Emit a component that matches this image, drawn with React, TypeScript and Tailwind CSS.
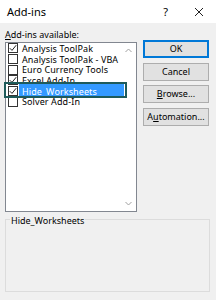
import React from "react";

const items = [
  { label: "Analysis ToolPak", checked: true },
  { label: "Analysis ToolPak - VBA", checked: false },
  { label: "Euro Currency Tools", checked: false },
  { label: "Excel Add-In", checked: true },
  { label: "Hide_Worksheets", checked: true, selected: true },
  { label: "Solver Add-In", checked: false },
];

const Check = ({ checked }: { checked: boolean }) => (
  <div className="w-[10px] h-[10px] shrink-0 border border-[#333] bg-white flex items-center justify-center">
    {checked && (
      <svg width="8" height="8" viewBox="0 0 8 8">
        <path d="M0.8 4.2 L3 6.4 L7.2 1.2" fill="none" stroke="#222" strokeWidth="1" />
      </svg>
    )}
  </div>
);

const Btn = ({ children, primary }: { children: React.ReactNode; primary?: boolean }) => (
  <div
    className={`h-[18px] w-[66px] flex items-center justify-center bg-[#e1e1e1] text-[9px] text-black border ${
      primary ? "border-[#0078d7] border-2" : "border-[#adadad]"
    }`}
  >
    {children}
  </div>
);

export default function App() {
  return (
    <div
      className="relative w-[216px] h-[300px] bg-[#f0f0f0] overflow-hidden text-black"
      style={{ fontFamily: '"Noto Sans", "Open Sans", sans-serif' }}
    >
      <div className="h-[23px] bg-white flex items-center pl-[7px] pr-[12px]">
        <span className="text-[11px] leading-none">Add-ins</span>
        <span className="ml-auto text-[11px] leading-none mr-[26px]">?</span>
        <svg width="10" height="10" viewBox="0 0 10 10">
          <path d="M1 1 L9 9 M9 1 L1 9" stroke="#222" strokeWidth="1" />
        </svg>
      </div>

      <div className="pl-[5px] pt-[6px] text-[9px] leading-[11px]">
        <span className="underline">A</span>dd-ins available:
      </div>

      <div className="flex mt-[2px] pl-[5px]">
        <div className="relative w-[132px] h-[170px] bg-white border border-[#828790]">
          <div className="absolute left-[13px] top-[41px] w-[105px] h-[12px] bg-[#3399ff]" />
          <div className="relative flex flex-col">
            {items.map((it) => (
              <div key={it.label} className="h-[10.7px] flex items-center pl-[2px] text-[9px] leading-[9px] tracking-[0.1px]">
                <Check checked={it.checked} />
                <span className={`ml-[4px] ${it.selected ? "text-white" : ""}`}>{it.label}</span>
              </div>
            ))}
          </div>
          <div className="absolute left-[-2px] top-[39px] w-[123px] h-[16px] border-2 border-[#1e5a5a]" />
          <svg className="absolute right-[4px] top-[5px]" width="7" height="5" viewBox="0 0 7 5">
            <path d="M0.5 4 L3.5 1 L6.5 4" fill="none" stroke="#a0a0a0" strokeWidth="1" />
          </svg>
          <svg className="absolute right-[4px] bottom-[5px]" width="7" height="5" viewBox="0 0 7 5">
            <path d="M0.5 1 L3.5 4 L6.5 1" fill="none" stroke="#a0a0a0" strokeWidth="1" />
          </svg>
        </div>

        <div className="ml-[6px] flex flex-col gap-[4.5px] mt-[-2px]">
          <Btn primary>OK</Btn>
          <Btn>Cancel</Btn>
          <Btn>
            <span className="underline">B</span>rowse...
          </Btn>
          <Btn>
            A<span className="underline">u</span>tomation...
          </Btn>
        </div>
      </div>

      <div className="relative ml-[5px] mt-[7px] w-[205px] h-[73px] border border-[#dcdcdc]">
        <div className="absolute left-[4px] top-[-5px] bg-[#f0f0f0] px-[1px] text-[9px] leading-[11px]">
          Hide_Worksheets
        </div>
      </div>
    </div>
  );
}
